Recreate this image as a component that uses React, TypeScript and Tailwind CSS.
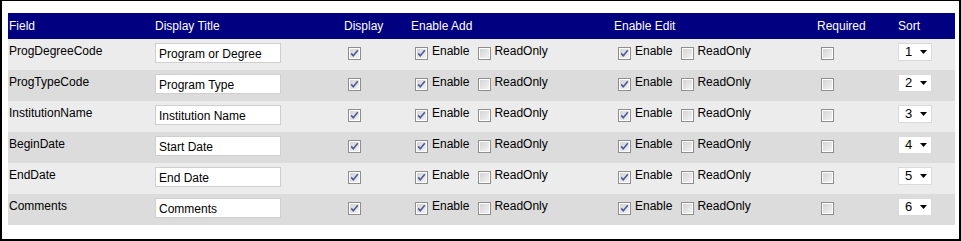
import React from "react";

const rows = [
  { field: "ProgDegreeCode", title: "Program or Degree", sort: "1" },
  { field: "ProgTypeCode", title: "Program Type", sort: "2" },
  { field: "InstitutionName", title: "Institution Name", sort: "3" },
  { field: "BeginDate", title: "Start Date", sort: "4" },
  { field: "EndDate", title: "End Date", sort: "5" },
  { field: "Comments", title: "Comments", sort: "6" },
];

function Box({ checked }: { checked: boolean }) {
  return (
    <svg width="13" height="13" viewBox="0 0 13 13" className="block shrink-0">
      <defs>
        <linearGradient id="cbg" x1="0" y1="0" x2="1" y2="1">
          <stop offset="0" stopColor="#d4d4d4" />
          <stop offset="1" stopColor="#f2f2f2" />
        </linearGradient>
      </defs>
      <rect x="0.5" y="0.5" width="12" height="12" fill="#ffffff" stroke="#8e8e8e" />
      <rect x="2" y="2" width="9" height="9" fill="url(#cbg)" />
      {checked && (
        <path d="M3.2 6.4 L5.3 8.8 L9.8 3.2" fill="none" stroke="#4b5a9c" strokeWidth="1.6" />
      )}
    </svg>
  );
}

function Pair() {
  return (
    <div className="flex items-start">
      <div className="ml-[4px] mt-[3px]">
        <Box checked />
      </div>
      <span className="ml-[4px]">Enable</span>
      <div className="ml-[9px] mt-[3px]">
        <Box checked={false} />
      </div>
      <span className="ml-[3px]">ReadOnly</span>
    </div>
  );
}

export default function App() {
  const cols = "grid grid-cols-[147px_189px_67px_203px_203px_81px_57px]";
  return (
    <div
      className="w-[961px] h-[241px] bg-white border-l-2 border-r-2 border-t border-b-2 border-black pl-[6px] pt-[12px] text-[12px] leading-[14px] text-black"
      style={{ fontFamily: '"Liberation Sans", Arial, sans-serif' }}
    >
      <div className="w-[947px]">
        <div className={`${cols} h-[26px] items-center bg-[#000080] text-white`}>
          <div className="pl-[1px]">Field</div>
          <div>Display Title</div>
          <div>Display</div>
          <div>Enable Add</div>
          <div>Enable Edit</div>
          <div>Required</div>
          <div>Sort</div>
        </div>
        {rows.map((r, i) => (
          <div
            key={r.field}
            className={`${cols} h-[31px] items-start pt-[5px] ${i % 2 === 0 ? "bg-[#ececec]" : "bg-[#dcdcdc]"}`}
          >
            <div className="pl-[1px]">{r.field}</div>
            <div className="-mt-[1px]">
              <div className="w-[126px] h-[20px] bg-white border border-[#cfcfcf] pl-[3px] flex items-center pt-[1px]">
                {r.title}
              </div>
            </div>
            <div className="pl-[4px] mt-[3px]">
              <Box checked />
            </div>
            <Pair />
            <Pair />
            <div className="pl-[4px] mt-[3px]">
              <Box checked={false} />
            </div>
            <div className="-mt-[1px]">
              <div className="w-[34px] h-[18px] bg-white border border-[#dadada] flex items-center pl-[6px]">
                <span className="text-[13px]">{r.sort}</span>
                <svg width="7" height="4" viewBox="0 0 7 4" className="ml-[8px]">
                  <path d="M0 0 H7 L3.5 4 Z" fill="#000" />
                </svg>
              </div>
            </div>
          </div>
        ))}
      </div>
    </div>
  );
}
